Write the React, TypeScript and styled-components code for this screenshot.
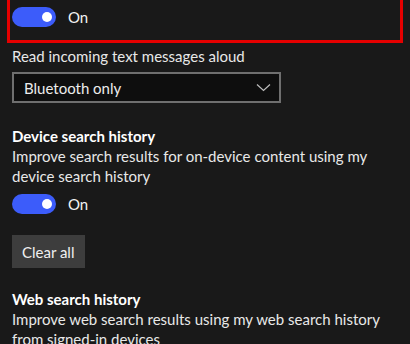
import React from "react";
import styled, { createGlobalStyle } from "styled-components";

const GlobalStyle = createGlobalStyle`
  html, body {
    margin: 0;
    padding: 0;
    background: #191919;
  }
  body {
    font-family: Lato, "Open Sans", sans-serif;
    color: #ffffff;
    overflow: hidden;
  }
`;

const Page = styled.div`
  width: 410px;
  height: 344px;
  overflow: hidden;
  background: #191919;
  display: flex;
  flex-direction: column;
`;

const Highlight = styled.div`
  margin: 0 7px;
  border: 3px solid #e60000;
  border-top: 0;
  padding: 7px 2px 13px;
`;

const Section = styled.div`
  padding: 0 12px;
  display: flex;
  flex-direction: column;
  align-items: flex-start;
`;

const ToggleRow = styled.div<{ $top?: number }>`
  display: flex;
  align-items: center;
  gap: 12px;
  margin-top: ${(p) => p.$top ?? 0}px;
`;

const Track = styled.div`
  width: 44px;
  height: 20px;
  border-radius: 10px;
  background: #3c5cfa;
  display: flex;
  align-items: center;
  justify-content: flex-end;
  padding-right: 4px;
  box-sizing: border-box;
`;

const Knob = styled.span`
  width: 10px;
  height: 10px;
  border-radius: 50%;
  background: #ffffff;
`;

const Text = styled.span`
  font-size: 15px;
  line-height: 20px;
  color: #f2f2f2;
  white-space: nowrap;
`;

const Label = styled.div<{ $top?: number }>`
  font-size: 15px;
  line-height: 20px;
  color: #e8e8e8;
  white-space: nowrap;
  margin-top: ${(p) => p.$top ?? 0}px;
`;

const Heading = styled(Label)`
  font-weight: 700;
  color: #ffffff;
`;

const Select = styled.div`
  margin-top: 6px;
  width: 269px;
  height: 31px;
  box-sizing: border-box;
  border: 2px solid #6f6f6f;
  background: #0e0e0e;
  display: flex;
  align-items: center;
  justify-content: space-between;
  padding: 0 8px 0 10px;
  font-size: 15px;
  color: #ececec;
`;

const Button = styled.div`
  margin-top: 21px;
  height: 33px;
  padding: 0 11px 0 10px;
  background: #3d3d3d;
  display: flex;
  align-items: center;
  font-size: 15px;
  color: #f0f0f0;
`;

const Toggle = ({ top }: { top?: number }) => (
  <ToggleRow $top={top}>
    <Track>
      <Knob />
    </Track>
    <Text>On</Text>
  </ToggleRow>
);

export default function App() {
  return (
    <Page>
      <GlobalStyle />
      <Highlight>
        <Toggle />
      </Highlight>
      <Section>
        <Label $top={3}>Read incoming text messages aloud</Label>
        <Select>
          <span>Bluetooth only</span>
          <svg width="15" height="9" viewBox="0 0 15 9">
            <path d="M1 1.5 L7.5 7.5 L14 1.5" fill="none" stroke="#bdbdbd" strokeWidth="1.2" />
          </svg>
        </Select>
        <Heading $top={23}>Device search history</Heading>
        <Label>
          Improve search results for on-device content using my
          <br />
          device search history
        </Label>
        <Toggle top={8} />
        <Button>Clear all</Button>
        <Heading $top={21}>Web search history</Heading>
        <Label>
          Improve web search results using my web search history
          <br />
          from signed-in devices
        </Label>
      </Section>
    </Page>
  );
}
